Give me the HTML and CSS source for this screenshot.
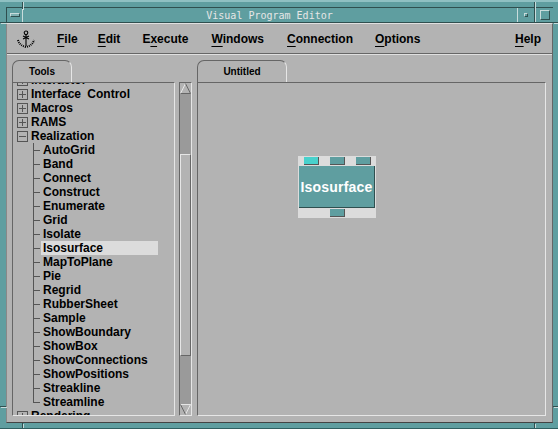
FILE: index.html
```html
<!DOCTYPE html>
<html lang="en">
<head>
<meta charset="utf-8">
<title>Visual Program Editor</title>
<link rel="stylesheet" href="styles.css">
</head>
<body>
<div class="window">
  <span class="notch v n-tl"></span>
  <span class="notch v n-tr"></span>
  <span class="notch h n-lt"></span>
  <span class="notch h n-rt"></span>
  <span class="notch h n-lb"></span>
  <span class="notch h n-rb"></span>
  <span class="notch v n-bl"></span>
  <span class="notch v n-br"></span>
  <div class="titlebar">
    <div class="tb-btn tb-menu"><span class="tb-dash"></span></div>
    <div class="tb-title">Visual Program Editor</div>
    <div class="tb-btn tb-min"><span class="tb-dot"></span></div>
    <div class="tb-btn tb-max"><span class="tb-square"></span></div>
  </div>
  <div class="client">
    <div class="menubar">
      <svg class="anchor" width="18" height="18" viewBox="0 0 18 18">
        <circle cx="9" cy="2.8" r="1.8" fill="none" stroke="#000" stroke-width="1.1"/>
        <path d="M9 5V16M6 6L12 9M12 6L6 9" stroke="#000" stroke-width="1.1" fill="none"/>
        <path d="M1 10C2 14 5 16 9 17C13 16 16 14 17 10" stroke="#000" stroke-width="2" stroke-dasharray="1 1" fill="none"/>
      </svg>
      <span class="menu m-file"><u>F</u>ile</span>
      <span class="menu m-edit"><u>E</u>dit</span>
      <span class="menu m-exec">E<u>x</u>ecute</span>
      <span class="menu m-win"><u>W</u>indows</span>
      <span class="menu m-conn"><u>C</u>onnection</span>
      <span class="menu m-opt"><u>O</u>ptions</span>
      <span class="menu m-help"><u>H</u>elp</span>
    </div>
    <div class="main">
      <section class="left">
        <div class="tab tab-tools">Tools</div>
        <div class="left-body">
          <div class="tree">
            <div class="tree-inner">
              <div class="row cat"><span class="box plus"></span>Interactor</div>
              <div class="row cat"><span class="box plus"></span>Interface Control</div>
              <div class="row cat"><span class="box plus"></span>Macros</div>
              <div class="row cat"><span class="box plus"></span>RAMS</div>
              <div class="row cat"><span class="box minus"></span>Realization</div>
              <div class="children">
                <div class="row leaf">AutoGrid</div>
                <div class="row leaf">Band</div>
                <div class="row leaf">Connect</div>
                <div class="row leaf">Construct</div>
                <div class="row leaf">Enumerate</div>
                <div class="row leaf">Grid</div>
                <div class="row leaf">Isolate</div>
                <div class="row leaf selected">Isosurface</div>
                <div class="row leaf">MapToPlane</div>
                <div class="row leaf">Pie</div>
                <div class="row leaf">Regrid</div>
                <div class="row leaf">RubberSheet</div>
                <div class="row leaf">Sample</div>
                <div class="row leaf">ShowBoundary</div>
                <div class="row leaf">ShowBox</div>
                <div class="row leaf">ShowConnections</div>
                <div class="row leaf">ShowPositions</div>
                <div class="row leaf">Streakline</div>
                <div class="row leaf last">Streamline</div>
              </div>
              <div class="row cat"><span class="box plus"></span>Rendering</div>
            </div>
          </div>
          <div class="scrollbar">
            <svg class="arrow" width="11" height="11" viewBox="0 0 11 11"><path d="M.5 10.5L5.5 .5" stroke="#e6e6e6" fill="none"/><path d="M5.5 .5L10.5 10.5H.5" stroke="#666" fill="none"/></svg>
            <div class="track"><div class="thumb"></div></div>
            <svg class="arrow" width="11" height="11" viewBox="0 0 11 11"><path d="M.5 .5H10.5L5.5 10.5" stroke="#e6e6e6" fill="none"/><path d="M.5 .5L5.5 10.5" stroke="#666" fill="none"/></svg>
          </div>
        </div>
      </section>
      <section class="right">
        <div class="tab tab-untitled">Untitled</div>
        <div class="canvas">
          <div class="node">
            <div class="ports ports-top"><span class="port active"></span><span class="port"></span><span class="port"></span></div>
            <div class="node-label">Isosurface</div>
            <div class="ports ports-bottom"><span class="port"></span></div>
          </div>
        </div>
      </section>
    </div>
  </div>
</div>
</body>
</html>
```
FILE: styles.css
```css
html, body { margin: 0; padding: 0; background: #5f9ea0; }
.window {
  width: 558px; height: 429px; box-sizing: border-box; overflow: hidden;
  background: #5f9ea0; display: flex; flex-direction: column;
  padding: 5px 5px 5px 6px;
  border-top: 2px solid #8fc0c2;
  border-bottom: 1px solid #2f5f60;
  font-family: "Liberation Sans", Arial, sans-serif;
  position: relative;
}
.notch { position: absolute; background: #2f4f4f; box-shadow: 1px 1px 0 #c8dcdc; }
.notch.v { width: 1px; }
.notch.h { height: 1px; }
.n-tl { left: 22px; top: -2px; height: 9px; }
.n-tr { left: 534px; top: -2px; height: 9px; }
.n-lt { left: 0; top: 20px; width: 6px; }
.n-rt { left: 553px; top: 20px; width: 5px; }
.n-lb { left: 0; top: 404px; width: 6px; }
.n-rb { left: 553px; top: 404px; width: 5px; }
.n-bl { left: 22px; top: 421px; height: 6px; }
.n-br { left: 534px; top: 421px; height: 6px; }
.titlebar {
  height: 16px; box-sizing: border-box; display: flex; flex: none;
  border-top: 1px solid #2f4f4f; border-bottom: 1px solid #2f4f4f;
  border-left: 1px solid #2f4f4f;
}
.tb-btn { flex: none; display: flex; align-items: center; justify-content: center; height: 100%; }
.tb-menu { width: 15px; border-right: 1px solid #c8dcdc; }
.tb-dash { width: 8px; height: 2px; border: 1px solid #2f4f4f; border-top-color: #c8dcdc; border-left-color: #c8dcdc; background: #7fb0b2; }
.tb-title {
  flex: 1; text-align: center; color: #e6e6e6; line-height: 15px;
  font-family: "DejaVu Sans Mono", monospace; font-size: 10px;
  padding-right: 1px;
}
.tb-min { width: 16px; border-left: 1px solid #c8dcdc; border-right: 1px solid #2f4f4f; }
.tb-dot { width: 2px; height: 2px; border: 1px solid #2f4f4f; border-top-color: #c8dcdc; border-left-color: #c8dcdc; }
.tb-max { width: 17px; border-left: 1px solid #c8dcdc; }
.tb-square { width: 8px; height: 8px; border: 1px solid #c8dcdc; border-right-color: #2f4f4f; border-bottom-color: #2f4f4f; }
.client {
  flex: 1; min-height: 0; background: #b3b3b3; display: flex; flex-direction: column;
  border-top: 1px solid #e0e0e0; border-right: 1px solid #666; border-bottom: 1px solid #444; border-left: 1px solid #888;
}
.menubar {
  height: 30px; flex: none; box-sizing: border-box; display: flex; align-items: center;
  border-bottom: 1px solid #666; box-shadow: 0 1px 0 #e0e0e0; padding-left: 10px; padding-right: 11px;
}
.anchor { flex: none; margin-right: 22px; }
.menu { font-size: 12px; font-weight: bold; color: #000; line-height: 16px; }
.menu u { text-underline-offset: 3px; text-decoration-thickness: 1px; }
.m-file { margin-right: 20px; }
.m-edit { margin-right: 22px; }
.m-exec { margin-right: 23px; }
.m-win { margin-right: 23px; }
.m-conn { margin-right: 22px; }
.m-help { margin-left: auto; }
.main { flex: 1; min-height: 0; display: flex; gap: 5px; padding: 6px 0 6px 5px; }
.left { width: 180px; flex: none; position: relative; display: flex; flex-direction: column; }
.right { flex: 1; position: relative; display: flex; flex-direction: column; margin-right: 6px; }
.tab {
  flex: none; height: 22px; box-sizing: border-box; text-align: center; font-weight: bold;
  font-size: 10px; line-height: 22px; color: #000; background: #b3b3b3;
  border: 1px solid #e6e6e6; border-left-color: #666; border-top-color: #666; border-bottom: 0;
  border-radius: 7px 7px 0 0; position: relative; z-index: 1;
}
.tab-tools { width: 60px; }
.tab-untitled { width: 90px; }
.left-body { flex: 1; min-height: 0; display: flex; gap: 4px; }
.tree {
  width: 163px; box-sizing: border-box; overflow: hidden; position: relative;
  border-top: 1px solid #666; border-left: 1px solid #666; border-right: 1px solid #e6e6e6;
  border-bottom: 1px solid #e6e6e6;
}
.tree-inner { margin-top: -10px; }
.row { height: 14px; line-height: 14px; font-size: 12px; font-weight: bold; color: #000; white-space: nowrap; }
.cat { display: flex; align-items: center; padding-left: 4px; gap: 3px; word-spacing: 3px; }
.box { width: 9px; height: 9px; flex: none; border: 1px solid #555; position: relative; }
.box::before { content: ""; position: absolute; left: 1px; right: 1px; top: 4px; height: 1px; background: #555; }
.plus::after { content: ""; position: absolute; top: 1px; bottom: 1px; left: 4px; width: 1px; background: #555; }
.children { position: relative; }
.leaf { padding-left: 30px; position: relative; width: 115px; }
.leaf::before { content: ""; position: absolute; left: 20px; top: 0; height: 14px; width: 7px; border-left: 1px solid #555; }
.leaf::after { content: ""; position: absolute; left: 20px; top: 7px; width: 7px; height: 1px; background: #555; }
.leaf.last::before { height: 7px; }
.selected { background: linear-gradient(to right, #b3b3b3 28px, #dcdcdc 28px); }
.scrollbar {
  width: 13px; box-sizing: border-box; flex: none; display: flex; flex-direction: column;
  border: 1px solid #e6e6e6; border-top-color: #666; border-left-color: #666; background: #9a9a9a;
}
.arrow { flex: none; display: block; background: #b3b3b3; }
.track { flex: 1; min-height: 0; padding: 60px 0 48px; background: #9a9a9a; display: flex; flex-direction: column; }
.thumb { flex: 1; background: #b3b3b3; border: 1px solid #e6e6e6; border-right-color: #666; border-bottom-color: #666; }
.canvas {
  flex: 1; position: relative; box-sizing: border-box;
  border-top: 1px solid #666; border-left: 1px solid #666; border-right: 1px solid #e6e6e6; border-bottom: 1px solid #e6e6e6;
}
.node { position: absolute; left: 100px; top: 73px; width: 78px; height: 62px; background: #dcdcdc; display: flex; flex-direction: column; }
.ports { flex: none; height: 10px; display: flex; box-sizing: border-box; padding: 1px 0; }
.ports-top { padding-left: 6px; gap: 11px; }
.ports-bottom { justify-content: center; }
.port { width: 15px; height: 8px; box-sizing: border-box; background: #5f9ea0; border-right: 1px solid #555; border-bottom: 1px solid #555; }
.port.active { background: #48d1cc; }
.node-label {
  flex: none; height: 42px; box-sizing: border-box; padding-top: 1px; margin: 0 1px; background: #5f9ea0; color: #fff; font-weight: bold; font-size: 14px;
  text-align: center; line-height: 40px; border-bottom: 1px solid #2f4f4f; border-right: 1px solid #2f4f4f; letter-spacing: .2px;
}
```
